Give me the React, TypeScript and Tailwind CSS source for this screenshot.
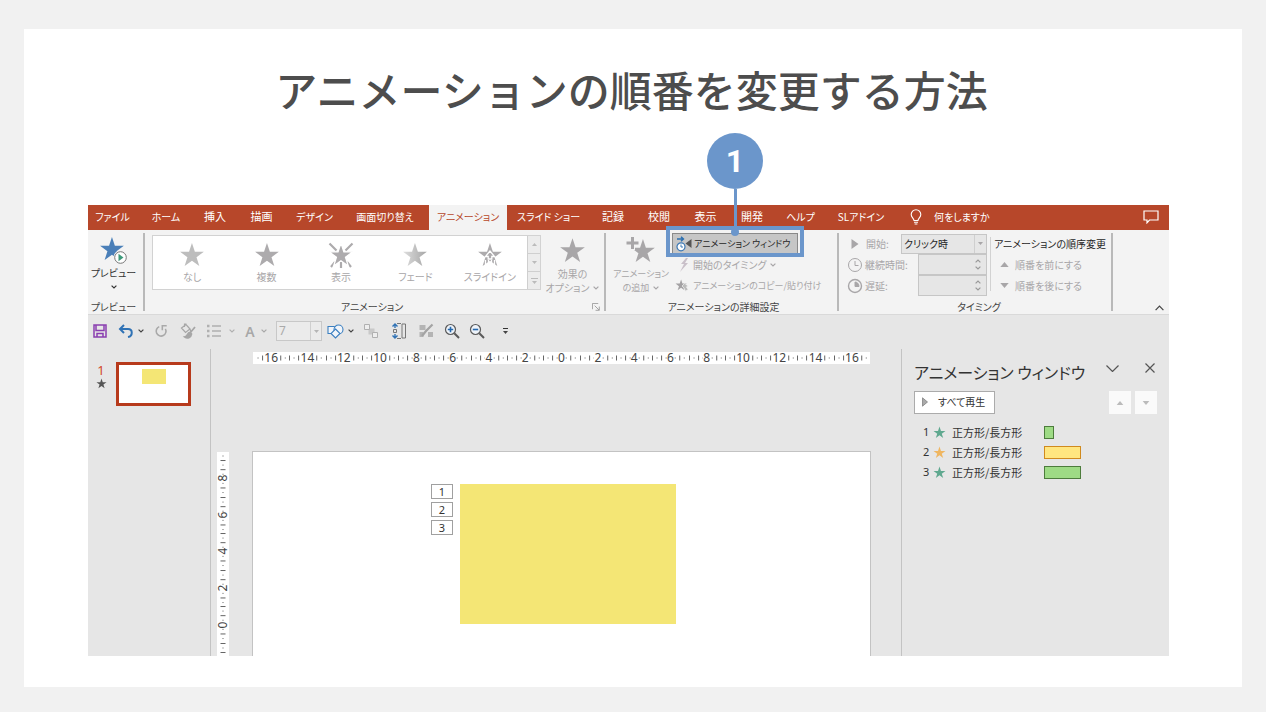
import React from "react";

const STAR = "M12 1l2.7 8.1H23l-6.8 5 2.6 8.2-6.8-5-6.8 5 2.6-8.2L1 9.1h8.3z";

const TABS = [
  { label: "ファイル", style: "w-[49px] text-[10px]" },
  { label: "ホーム", style: "w-[58px] text-[10px]" },
  { label: "挿入", style: "w-[40px] text-[11px]" },
  { label: "描画", style: "w-[53px] text-[11px]" },
  { label: "デザイン", style: "w-[53px] text-[10px]" },
  { label: "画面切り替え", style: "w-[88px] text-[10px]" },
  { label: "アニメーション", style: "w-[78px] bg-[#f3f3f3] text-[10px] text-[#b7472a]" },
  { label: "スライド ショー", style: "w-[83px] text-[10px]" },
  { label: "記録", style: "w-[46px] text-[11px]" },
  { label: "校閲", style: "w-[46px] text-[11px]" },
  { label: "表示", style: "w-[47px] text-[11px]" },
  { label: "開発", style: "w-[46px] text-[11px]" },
  { label: "ヘルプ", style: "w-[51px] text-[10px]" },
  { label: "SLアドイン", style: "w-[70px] text-[10px]" },
];

function Star({ className }: { className?: string }) {
  return (
    <svg viewBox="0 0 24 24" className={className} fill="currentColor" aria-hidden="true">
      <path d={STAR} />
    </svg>
  );
}

function Chevron({ className = "" }: { className?: string }) {
  return (
    <svg viewBox="0 0 6 4" className={`h-1 w-1.5 shrink-0 ${className}`} fill="none" stroke="currentColor" strokeWidth="1.2" aria-hidden="true">
      <path d="M.6 .6L3 3 5.4 .6" />
    </svg>
  );
}

function Triangle({ up = false, className = "" }: { up?: boolean; className?: string }) {
  return (
    <svg viewBox="0 0 10 6" className={className} fill="currentColor" aria-hidden="true">
      <path d={up ? "M0 6L5 0l5 6z" : "M0 0h10L5 6z"} />
    </svg>
  );
}

function Tabs() {
  return (
    <nav className="flex h-[25px] items-stretch bg-[#b7472a] text-white">
      {TABS.map((tab) => (
        <button key={tab.label} className={`shrink-0 pb-0.5 whitespace-nowrap ${tab.style}`}>
          {tab.label}
        </button>
      ))}
      <button className="ml-[14px] flex items-center gap-3 pb-0.5 text-[10px] whitespace-nowrap">
        <svg viewBox="0 0 12 16" className="h-4 w-3" fill="none" stroke="currentColor" strokeWidth="1.1" aria-hidden="true">
          <path d="M4 11.5c0-2-2.8-3-2.8-6a4.8 4.8 0 0 1 9.6 0c0 3-2.8 4-2.8 6zM4 13.2h4M4.6 15h2.8" />
        </svg>
        何をしますか
      </button>
      <button aria-label="コメント" className="mr-2.5 ml-auto pb-0.5">
        <svg viewBox="0 0 16 14" className="h-3.5 w-4" fill="none" stroke="currentColor" strokeWidth="1.2" aria-hidden="true">
          <path d="M1 1h14v9H6.5L4 12.8V10H1z" />
        </svg>
      </button>
    </nav>
  );
}

function GroupLabel({ children }: { children: React.ReactNode }) {
  return <div className="flex-1 text-center text-[10px] leading-[14px] whitespace-nowrap text-[#444]">{children}</div>;
}

function EffectIcon({ kind }: { kind: string }) {
  return (
    <svg viewBox="0 0 28 28" className="h-7 w-7" aria-hidden="true">
      <defs>
        <linearGradient id="fade" x1="0" x2="1">
          <stop offset="0" stopColor="#dedede" />
          <stop offset="1" stopColor="#a6a6a6" />
        </linearGradient>
      </defs>
      {kind === "appear" && (
        <path d="M2.500 2.500l7 7M25.500 2.500l-7 7M14 20v7M4 26l4-5M24 26l-4-5" stroke="#adabad" strokeWidth="2.200" />
      )}
      <path
        d={STAR}
        transform="translate(1 1) scale(1.08)"
        fill={kind === "none" ? "#bdbdbd" : kind === "fade" ? "url(#fade)" : "#adabad"}
        stroke={kind === "appear" ? "#fff" : "none"}
        strokeWidth="1.2"
      />
      {kind === "slide" && (
        <path d="M14 10l-4.500 5.500h2.700v2.500h3.600v-2.500h2.700zM9.500 19v7M12.500 19v7M15.500 19v7M18.500 19v7" stroke="#fff" fill="#adabad" strokeWidth="1.300" />
      )}
    </svg>
  );
}

const EFFECTS = [
  { name: "なし", kind: "none" },
  { name: "複数", kind: "multi" },
  { name: "表示", kind: "appear" },
  { name: "フェード", kind: "fade" },
  { name: "スライドイン", kind: "slide" },
];

function Callout() {
  return (
    <div className="pointer-events-none absolute -inset-x-1.5 -top-[7px] -bottom-[3px] z-10 border-4 border-[#6b96cb]">
      <div className="absolute bottom-full left-1/2 flex -translate-x-1/2 translate-y-1.5 flex-col items-center">
        <div className="flex h-14 w-14 items-center justify-center rounded-full bg-[#6b96cb] font-['Roboto',sans-serif] text-[32px] font-bold text-white">1</div>
        <div className="h-[43px] w-[3px] bg-[#6b96cb]" />
        <div className="-mt-1 h-2 w-2 rounded-full bg-[#6b96cb]" />
      </div>
    </div>
  );
}

function Spinner({ id }: { id: string }) {
  return (
    <span className="flex h-[21px] w-[69px] border border-[#c6c6c6] bg-[#e6e6e6] text-[#999]">
      <input id={id} className="min-w-0 flex-1 bg-transparent px-1 text-[10px] outline-none" />
      <span className="flex w-4 flex-col items-center justify-between py-1">
        <Chevron className="rotate-180" />
        <Chevron />
      </span>
    </span>
  );
}

function Ribbon() {
  return (
    <section className="flex h-[85px] border-b border-[#d9d9d9] bg-[#f3f3f3] pt-[3px] text-[#a8a6a8]">
      <div className="mb-[3px] flex w-[57px] shrink-0 flex-col border-r-2 border-[#b9b9b9]">
        <button className="flex h-[67px] shrink-0 flex-col items-center pt-1 pr-1 text-[10px] leading-4 whitespace-nowrap text-[#333]">
          <svg viewBox="0 0 30 28" className="h-7 w-[30px] shrink-0" aria-hidden="true">
            <path d={STAR} transform="translate(0 -1) scale(1.08)" fill="#4a7fb8" />
            <circle cx="21.5" cy="20.5" r="7" fill="#f3f3f3" />
            <circle cx="21.5" cy="20.5" r="5.8" fill="#fff" stroke="#777" />
            <path d="M19.5 16.8v7.4l5-3.7z" fill="#3d9a7b" />
          </svg>
          プレビュー
          <Chevron className="mt-1" />
        </button>
        <div className="flex pr-1"><GroupLabel>プレビュー</GroupLabel></div>
      </div>

      <div className="mb-[3px] flex w-[461px] shrink-0 flex-col border-r-2 border-[#b9b9b9] pl-[7px]">
        <div className="flex h-[67px] shrink-0 items-start">
          <div className="mt-0.5 flex h-[55px] w-[389px] shrink-0 border border-[#d2d2d2] bg-white pl-0.5">
            {EFFECTS.map((e) => (
              <button key={e.name} className="flex min-w-0 flex-1 flex-col items-center pt-[5px] text-[10px] leading-4 whitespace-nowrap">
                <EffectIcon kind={e.kind} />
                {e.name}
              </button>
            ))}
            <div className="flex w-[13px] flex-col divide-y divide-[#cfcfcf] border-l border-[#cfcfcf] bg-[#ececec] text-[#bbb]">
              <button aria-label="上へ" className="flex flex-1 items-center justify-center"><Triangle up className="h-[3px] w-[5px]" /></button>
              <button aria-label="下へ" className="flex flex-1 items-center justify-center"><Triangle className="h-[3px] w-[5px]" /></button>
              <button aria-label="その他" className="flex flex-1 flex-col items-center justify-center gap-0.5">
                <span className="h-px w-[7px] bg-[#bbb]" />
                <Triangle className="h-[3px] w-[5px]" />
              </button>
            </div>
          </div>
          <button className="flex flex-1 flex-col items-center pt-1 text-[10px] leading-[14px] whitespace-nowrap">
            <Star className="mb-[3px] h-[27px] w-[27px]" />
            <span>効果の</span>
            <span className="flex items-center gap-1">オプション <Chevron /></span>
          </button>
        </div>
        <div className="flex">
          <GroupLabel>アニメーション</GroupLabel>
          <button aria-label="効果のその他のオプション" className="w-3">
            <svg viewBox="0 0 9 9" className="h-2 w-2" fill="none" stroke="#9a9a9a" aria-hidden="true">
              <path d="M.5 7V.5H7M3 3l5 5M8.2 4v4.2H4" />
            </svg>
          </button>
        </div>
      </div>

      <div className="mb-[3px] flex w-[233px] shrink-0 flex-col border-r-2 border-[#b9b9b9] pl-1">
        <div className="flex h-[67px] shrink-0 items-start">
          <button className="flex w-[62px] shrink-0 flex-col items-center pt-1 text-[9px] leading-[14px] whitespace-nowrap">
            <svg viewBox="0 0 30 28" className="mb-0.5 h-7 w-[30px]" fill="currentColor" aria-hidden="true">
              <path d={STAR} transform="translate(4 1) scale(1.08)" />
              <path d="M4 -1h5v4.500h4.500v5h-4.500v4.500h-5v-4.500h-4.500v-5h4.500z" fill="#f3f3f3" />
              <path d="M5 0h3v4.500h4.500v3h-4.500v4.500h-3v-4.500h-4.500v-3h4.500z" />
            </svg>
            <span>アニメーション</span>
            <span className="flex items-center gap-1">の追加 <Chevron /></span>
          </button>
          <div className="flex flex-1 flex-col items-start text-[10px] whitespace-nowrap">
            <div className="relative">
              <button className="flex h-[21px] w-[126px] items-center gap-0.5 border border-[#8a8a8a] bg-[#c6c6c6] px-[3px] text-[9px] text-[#262626]">
                <svg viewBox="0 0 16 16" className="h-4 w-4 shrink-0" fill="none" aria-hidden="true">
                  <path d="M1 3h6M5 .8L7.400 3 5 5.200" stroke="#2b6fb0" strokeWidth="1.500" />
                  <circle cx="5" cy="10.800" r="4" fill="#fff" stroke="#3c78b4" strokeWidth="1.200" />
                  <path d="M5 8.500V11h2" stroke="#3c78b4" />
                  <path d="M15.500 3v9L9.500 7.500z" fill="#555" />
                </svg>
                アニメーション ウィンドウ
              </button>
              <Callout />
            </div>
            <button className="flex h-[21px] items-center gap-1 pl-[7px]">
              <svg viewBox="0 0 10 14" className="h-3.5 w-2.5" fill="#c9c0c9" aria-hidden="true"><path d="M7 0L2 6h3L1 14l8-9H6L9 0z" /></svg>
              開始のタイミング <Chevron />
            </button>
            <button className="flex h-[21px] items-center gap-1 pl-[3px] text-[9px]">
              <svg viewBox="0 0 16 16" className="h-3.5 w-3.5" aria-hidden="true">
                <path d={STAR} transform="scale(.58)" fill="#a3a1a3" />
                <path d="M8 8l3-3 4 3-2 1 2 3-3 2-2-4z" fill="#bbb" stroke="#f3f3f3" strokeWidth=".8" />
              </svg>
              アニメーションのコピー/貼り付け
            </button>
          </div>
        </div>
        <GroupLabel>アニメーションの詳細設定</GroupLabel>
      </div>

      <div className="mb-[3px] flex w-[274px] shrink-0 flex-col border-r-2 border-[#b9b9b9] pl-2">
        <div className="flex h-[67px] shrink-0 items-start">
          <div className="flex w-[140px] flex-col text-[10px] whitespace-nowrap">
            <div className="flex h-[21px] items-center justify-between">
              <label htmlFor="start" className="flex items-center gap-[3px]">
                <svg viewBox="0 0 16 16" className="h-4 w-4" fill="currentColor" aria-hidden="true"><path d="M4.500 3v10l7-5z" /></svg>
                開始:
              </label>
              <span className="relative flex h-5 w-[86px] border border-[#c6c6c6] bg-[#e6e6e6]">
                <select id="start" className="w-full appearance-none bg-transparent px-0.5 text-[10px] text-[#262626] outline-none">
                  <option>クリック時</option>
                </select>
                <span className="pointer-events-none absolute inset-y-0 right-0 flex w-3 items-center justify-center border-l border-[#cfcfcf]">
                  <Triangle className="h-[3px] w-[5px]" />
                </span>
              </span>
            </div>
            <div className="flex h-[21px] items-center justify-between">
              <label htmlFor="duration" className="flex items-center gap-0.5">
                <svg viewBox="0 0 16 16" className="h-4 w-4" fill="none" stroke="currentColor" aria-hidden="true"><circle cx="8" cy="8" r="6.500" /><path d="M8 4v4.500h3.500" /></svg>
                継続時間:
              </label>
              <Spinner id="duration" />
            </div>
            <div className="flex h-[21px] items-center justify-between">
              <label htmlFor="delay" className="flex items-center gap-0.5">
                <svg viewBox="0 0 16 16" className="h-4 w-4" fill="none" stroke="currentColor" aria-hidden="true"><circle cx="8" cy="8" r="6.500" strokeWidth="1.400" /><path d="M8 4v4.500h4A4 4.500 0 0 0 8 4z" fill="currentColor" /></svg>
                遅延:
              </label>
              <Spinner id="delay" />
            </div>
          </div>
          <div className="mt-1 ml-[3px] h-[54px] w-px shrink-0 bg-[#d2d2d2]" />
          <div className="flex flex-col items-start pl-[3px] text-[10px] whitespace-nowrap">
            <div className="flex h-[21px] items-center text-[#262626]">アニメーションの順序変更</div>
            <button className="flex h-[21px] items-center gap-1.5 pl-1.5"><Triangle up className="h-[5px] w-[9px]" />順番を前にする</button>
            <button className="flex h-[21px] items-center gap-1.5 pl-1.5"><Triangle className="h-[5px] w-[9px]" />順番を後にする</button>
          </div>
        </div>
        <GroupLabel>タイミング</GroupLabel>
      </div>

      <button aria-label="リボンを折りたたむ" className="mr-[5px] ml-auto flex items-end pb-[3px] text-[#444]">
        <svg viewBox="0 0 9 6" className="h-1.5 w-[9px]" fill="none" stroke="currentColor" strokeWidth="1.200" aria-hidden="true"><path d="M.6 5.200l3.900-4 3.900 4" /></svg>
      </button>
    </section>
  );
}

function QuickAccess() {
  return (
    <div className="flex h-[34px] items-center pb-0.5 text-[#444]">
      <button aria-label="保存" className="flex w-6 justify-center">
        <svg viewBox="0 0 14 14" className="h-3.5 w-3.5" fill="none" stroke="#8a3fb0" strokeWidth="1.500" aria-hidden="true"><path d="M1 1h12v12H1zM3 1v5.500h8V1M4 13V9.500h6V13" /></svg>
      </button>
      <button aria-label="元に戻す" className="flex w-9 items-center justify-center gap-1 pl-0.5">
        <svg viewBox="0 0 16 16" className="h-4 w-4" fill="none" stroke="#2f72b5" strokeWidth="2" aria-hidden="true"><path d="M6 2L2 6l4 4M2.500 6H10c5 0 5 7 0 8" /></svg>
        <Chevron />
      </button>
      <button aria-label="やり直し" className="flex w-[26px] justify-center">
        <svg viewBox="0 0 16 16" className="h-3.5 w-3.5" fill="none" stroke="#a9a9a9" strokeWidth="1.800" aria-hidden="true"><path d="M6 3a5.600 5.600 0 1 0 7 2.500M14.500 2H9.500v5" /></svg>
      </button>
      <button aria-label="書式のコピー" className="flex w-[27px] justify-center">
        <svg viewBox="0 0 16 16" className="h-4 w-4" fill="none" stroke="#a6a6a6" strokeWidth="1.200" aria-hidden="true"><path d="M1.500 5L6 1.500 10 6 5.500 9.500zM4.500 4V1h2M10 6l1 3" /><path d="M15 4l-5 6M10 9.500c-3 0-2 4-5 4.500 2 1.500 6 1 6.500-3z" fill="#a6a6a6" strokeWidth="1.800" /></svg>
      </button>
      <button aria-label="箇条書き" className="flex w-9 items-center justify-center gap-2 pl-1 text-[#b0b0b0]">
        <svg viewBox="0 0 14 14" className="h-3.5 w-3.5" fill="none" stroke="currentColor" strokeWidth="1.300" aria-hidden="true"><path d="M5 2h9M5 7h9M5 12h9" /><path d="M0 2h2.500M0 7h2.500M0 12h2.500" strokeWidth="2.400" /></svg>
        <Chevron />
      </button>
      <button aria-label="フォントの色" className="flex w-[34px] items-center justify-center gap-1.5 pl-1 font-['Noto_Sans',sans-serif] text-[14px] font-semibold text-[#a8a8a8]">
        A <Chevron />
      </button>
      <label className="relative mr-0.5 ml-[5px] flex h-5 w-[46px] border border-[#c8c8c8] bg-[#ebebeb]">
        <select aria-label="フォント サイズ" className="w-full appearance-none bg-transparent px-0.5 font-['Noto_Sans',sans-serif] text-[12px] text-[#aaa] outline-none">
          <option>7</option>
        </select>
        <span className="pointer-events-none absolute inset-y-0 right-0 flex w-[11px] items-center justify-center border-l border-[#cfcfcf] text-[#b5b5b5]">
          <Triangle className="h-[3px] w-[5px]" />
        </span>
      </label>
      <button aria-label="図形" className="flex w-8 items-center justify-center gap-1">
        <svg viewBox="0 0 17 16" className="h-4 w-[17px]" fill="#f1f5fa" stroke="#3b7fc0" strokeWidth="1.100" aria-hidden="true"><path d="M1 3.500h8v7H1z" /><circle cx="11.500" cy="6.500" r="4.500" /><path d="M8.500 6l4.500 4.500L8.500 15 4 10.500z" /></svg>
        <Chevron />
      </button>
      <button aria-label="グループ化" className="flex w-[29px] justify-center">
        <svg viewBox="0 0 16 16" className="h-4 w-4" fill="#eee" stroke="#b0b0b0" aria-hidden="true"><path d="M5.500 5.500h6v6h-6z" fill="#c9c9c9" stroke="none" /><path d="M1.500 1.500h5v5h-5zM9.500 9.500h5v5h-5z" /></svg>
      </button>
      <button aria-label="配置" className="flex w-[27px] justify-center">
        <svg viewBox="0 0 16 16" className="h-4 w-4" fill="none" aria-hidden="true"><path d="M4 1v4M4 11v4M1.500 3.500L4 1l2.500 2.500M1.500 12.500L4 15l2.500-2.500" stroke="#2f72b5" strokeWidth="1.400" /><path d="M2.500 6.500h3v3h-3zM11 1h3.500v14H11zM6 .5h4M6 15.500h4" stroke="#777" /></svg>
      </button>
      <button aria-label="クイック スタイル" className="flex w-[27px] justify-center">
        <svg viewBox="0 0 16 16" className="h-4 w-4" aria-hidden="true"><path d="M1.500 2h6v5h-6zM1.500 9h4v5h-4zM10 9h5v5h-5z" fill="#b4b4b4" /><path d="M14.500 1.500L8 8l-4 5" stroke="#a4a4a4" strokeWidth="2.200" /></svg>
      </button>
      {[true, false].map((zoomIn) => (
        <button key={String(zoomIn)} aria-label={zoomIn ? "拡大" : "縮小"} className="flex w-[25px] justify-center">
          <svg viewBox="0 0 16 16" className="h-4 w-4" fill="none" stroke="#5a5a5a" aria-hidden="true">
            <circle cx="6.500" cy="6.500" r="5" fill="#eef3f9" strokeWidth="1.200" />
            <path d="M10.300 10.300L15 15" strokeWidth="2" />
            <path d={zoomIn ? "M6.500 3.800v5.400M3.800 6.500h5.400" : "M3.800 6.500h5.400"} stroke="#2468ae" strokeWidth="1.600" />
          </svg>
        </button>
      ))}
      <button aria-label="ツール バーのカスタマイズ" className="ml-1.5 flex w-5 flex-col items-center gap-0.5">
        <span className="h-px w-[5px] bg-[#333]" />
        <Triangle className="h-[3px] w-[5px]" />
      </button>
    </div>
  );
}

function RulerMarks({ vertical = false, first = false }: { vertical?: boolean; first?: boolean }) {
  const marks = [
    { at: 0, len: 5 },
    { at: 4.5, len: 1 },
    { at: 9, len: 5 },
    { at: 13.5, len: 1 },
    { at: 22.5, len: 1 },
    { at: 27, len: 5 },
    { at: 31.5, len: 1 },
  ].filter((m) => !(first && m.at === 0));
  return (
    <svg viewBox={vertical ? "0 0 12 36" : "0 0 36 12"} preserveAspectRatio="none" className="absolute inset-0 h-full w-full" fill="#666" aria-hidden="true">
      {marks.map((m) =>
        vertical ? (
          <rect key={m.at} x={6 - m.len / 2} y={m.at} width={m.len} height="1" />
        ) : (
          <rect key={m.at} x={m.at} y={6 - m.len / 2} width="1" height={m.len} />
        ),
      )}
    </svg>
  );
}

const H_RULER = [16, 14, 12, 10, 8, 6, 4, 2, 0, 2, 4, 6, 8, 10, 12, 14, 16];
const V_RULER = [8, 6, 4, 2, 0];

function Editor() {
  return (
    <main className="grid min-w-0 flex-1 grid-cols-[18px_1fr] gap-x-[23px] border-x border-[#c3c3c3] pt-[3px] pr-[30px] font-['Noto_Sans',sans-serif]">
      <div />
      <div className="mx-px mb-[87px] flex h-3 bg-white text-[12px] leading-3 text-[#444]">
        {H_RULER.map((n, i) => (
          <div key={i} className="relative flex flex-1 justify-center">
            <RulerMarks first={i === 0} />
            <span className="relative bg-white">{n}</span>
          </div>
        ))}
      </div>
      <div className="mt-px ml-1.5 flex flex-col bg-white text-[12px] leading-3 text-[#444]">
        <svg viewBox="0 0 12 8" className="h-2 w-3" fill="#666" aria-hidden="true"><path d="M5.500 3.500h1v1h-1z" /></svg>
        {V_RULER.map((n) => (
          <div key={n} className="relative flex flex-1 items-center justify-center">
            <RulerMarks vertical />
            <span className="relative -rotate-90">{n}</span>
          </div>
        ))}
        <svg viewBox="0 0 12 13" className="h-[13px] w-3" fill="#666" aria-hidden="true"><path d="M3.500 0h5v1h-5zM5.500 4.500h1v1h-1zM3.500 9h5v1h-5z" /></svg>
      </div>
      <div className="flex min-h-[205px] items-start border border-b-0 border-[#c3c3c3] bg-white pt-8 pl-[178px]">
        <div className="flex w-[22px] flex-col gap-[3px] text-[11px] leading-[13px] text-[#333]">
          {[1, 2, 3].map((n) => (
            <span key={n} className="border border-[#a0a0a0] text-center">{n}</span>
          ))}
        </div>
        <div className="ml-[7px] h-[140px] w-[216px] bg-[#f4e675]" />
      </div>
    </main>
  );
}

const EVENTS = [
  { n: 1, star: "text-[#5fa88f]", bar: "w-2.5 border-[#4d7c3c] bg-[#9edb85]" },
  { n: 2, star: "text-[#efb661]", bar: "w-[37px] border-[#d08a1e] bg-[#ffe680]" },
  { n: 3, star: "text-[#5fa88f]", bar: "w-[37px] border-[#4d7c3c] bg-[#9edb85]" },
];

function AnimationPane() {
  return (
    <aside className="w-[267px] shrink-0 px-3 pt-[11px] text-[#333]">
      <div className="flex h-6 items-center whitespace-nowrap">
        <h2 className="text-[16px] leading-6">アニメーション ウィンドウ</h2>
        <button aria-label="作業ウィンドウのオプション" className="mb-2 ml-auto">
          <svg viewBox="0 0 13 7" className="h-[7px] w-[13px]" fill="none" stroke="#555" strokeWidth="1.200" aria-hidden="true"><path d="M.5 .5l6 6 6-6" /></svg>
        </button>
        <button aria-label="閉じる" className="mr-0.5 mb-2 ml-[26px]">
          <svg viewBox="0 0 10 10" className="h-2.5 w-2.5" fill="none" stroke="#555" strokeWidth="1.200" aria-hidden="true"><path d="M.5 .5l9 9M9.500 .5l-9 9" /></svg>
        </button>
      </div>
      <div className="mt-[7px] flex h-[23px] items-stretch gap-1">
        <button className="mr-auto flex w-[81px] items-center gap-2.5 border border-[#ababab] bg-white pb-0.5 pl-[7px] text-[10px] whitespace-nowrap">
          <svg viewBox="0 0 6 10" className="h-2.5 w-1.5" fill="#aaa" stroke="#777" strokeWidth=".7" aria-hidden="true"><path d="M.5 .8v8.400L5.500 5z" /></svg>
          すべて再生
        </button>
        <button aria-label="前に移動" className="flex w-[22px] items-center justify-center bg-[#fafafa] text-[#bbb]"><Triangle up className="h-1 w-2" /></button>
        <button aria-label="後に移動" className="flex w-[22px] items-center justify-center bg-[#fafafa] text-[#bbb]"><Triangle className="h-1 w-2" /></button>
      </div>
      <ol className="mt-2 pl-[9px] text-[11px] leading-5">
        {EVENTS.map((e) => (
          <li key={e.n} className="flex h-5 items-center whitespace-nowrap">
            <span className="w-2.5 font-['Noto_Sans',sans-serif]">{e.n}</span>
            <Star className={`mr-1.5 h-[13px] w-[13px] ${e.star}`} />
            <span className="w-[92px]">正方形/長方形</span>
            <span className={`h-[13px] border ${e.bar}`} />
          </li>
        ))}
      </ol>
    </aside>
  );
}

export default function App() {
  return (
    <div className="min-h-screen bg-[#f1f1f1] px-6 pt-[29px] pb-[25px] font-['Noto_Sans_CJK_JP',sans-serif]">
      <div className="bg-white pt-[30px] pr-[73px] pb-[31px] pl-16">
        <h1 className="pl-1.5 text-center text-[42px] leading-[60px] font-medium whitespace-nowrap text-[#4d4d4d]">アニメーションの順番を変更する方法</h1>
        <div className="mt-[86px] bg-[#e6e6e6] [font-feature-settings:'palt']">
          <Tabs />
          <Ribbon />
          <QuickAccess />
          <div className="flex items-stretch">
            <aside className="flex w-[122px] shrink-0 items-start gap-[7px] pt-[13px] pl-[5px]">
              <div className="flex w-4 flex-col items-center font-['Noto_Sans',sans-serif] text-[13px] leading-4 text-[#d24726]">
                1
                <Star className="h-[11px] w-[11px] text-[#555]" />
              </div>
              <button aria-label="スライド 1" className="flex h-11 w-[75px] justify-center border-[3px] border-[#b73a1c] bg-white pt-1">
                <span className="h-[15px] w-6 bg-[#f4e675]" />
              </button>
            </aside>
            <Editor />
            <AnimationPane />
          </div>
        </div>
      </div>
    </div>
  );
}
